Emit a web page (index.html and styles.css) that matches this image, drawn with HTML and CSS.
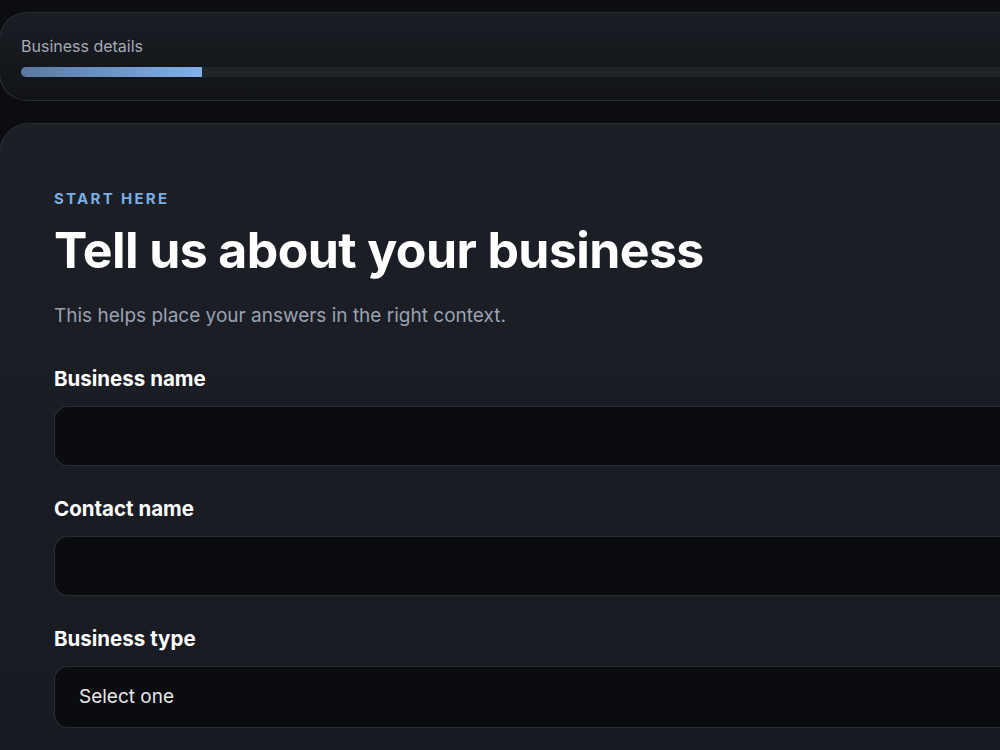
FILE: index.html
```html
<!DOCTYPE html>
<html lang="en">
<head>
  <meta charset="UTF-8" />
  <meta name="viewport" content="width=device-width, initial-scale=1.0"/>
  <title>Business details</title>
  <link rel="stylesheet" href="styles.css">
</head>
<body>
<div class="page">
  <div class="card progress-card">
    <div class="step-name">Business details</div>
    <div class="progress-track">
      <div class="progress-fill"></div>
    </div>
  </div>

  <div class="card form-card">
    <div class="eyebrow">START HERE</div>
    <h1>Tell us about your business</h1>
    <p class="lead">This helps place your answers in the right context.</p>

    <div class="field">
      <label class="field-label" for="businessName">Business name</label>
      <input type="text" id="businessName" class="field-input">
    </div>

    <div class="field">
      <label class="field-label" for="contactName">Contact name</label>
      <input type="text" id="contactName" class="field-input">
    </div>

    <div class="field">
      <label class="field-label" for="businessType">Business type</label>
      <div class="field-input field-select" id="businessType">Select one</div>
    </div>
  </div>
</div>
</body>
</html>
```

FILE: styles.css
```css
html, body {
  margin: 0;
  height: 100%;
  overflow: hidden;
}
body {
  font-family: Inter, "Noto Sans", sans-serif;
  background-color: #0c0d11;
  color: #f1f1f1;
}
.page {
  padding-top: 12px;
  margin-left: -1px;
  width: 1080px;
}
.card {
  border: 1px solid #2a2d33;
  border-right: none;
  box-sizing: border-box;
}
.progress-card {
  height: 89px;
  padding: 23px 21px 0;
  border-radius: 28px 0 0 28px;
  background: linear-gradient(180deg, #1a1d23 0%, #111318 100%);
}
.step-name {
  font-size: 16px;
  line-height: 20px;
  color: #a4aab6;
}
.progress-track {
  margin-top: 11px;
  height: 10px;
  border-radius: 5px 0 0 5px;
  background-color: #202327;
}
.progress-fill {
  width: 181px;
  height: 100%;
  border-radius: 5px 0 0 5px;
  background: linear-gradient(90deg, #5a78a2 0%, #7fb1ea 100%);
}
.form-card {
  margin-top: 22px;
  padding: 65px 54px 40px;
  border-radius: 30px 0 0 0;
  background: linear-gradient(180deg, #1c1f26 0%, #171a21 100%);
  min-height: 700px;
}
.eyebrow {
  font-size: 15px;
  line-height: 20px;
  font-weight: 700;
  letter-spacing: 2.3px;
  color: #7aaee6;
}
h1 {
  margin: 11px 0 0;
  font-size: 50px;
  line-height: 60px;
  font-weight: 700;
  letter-spacing: -0.6px;
  color: #ffffff;
}
.lead {
  margin: 23px 0 0;
  font-size: 19px;
  line-height: 26px;
  color: #9aa2b1;
}
.field {
  margin-top: 30px;
}
.lead + .field {
  margin-top: 37px;
}
.field-label {
  display: block;
  font-size: 20.5px;
  line-height: 26px;
  font-weight: 700;
  color: #ffffff;
}
.field-input {
  display: block;
  margin-top: 14px;
  width: 100%;
  height: 60px;
  box-sizing: border-box;
  background-color: #0b0c10;
  border: 1px solid #2b2e34;
  border-right: none;
  border-radius: 14px 0 0 14px;
  color: #e8e8e8;
  font-family: inherit;
  font-size: 19px;
  padding: 0 24px;
  outline: none;
}
.field-select {
  height: 62px;
  line-height: 60px;
}
```
